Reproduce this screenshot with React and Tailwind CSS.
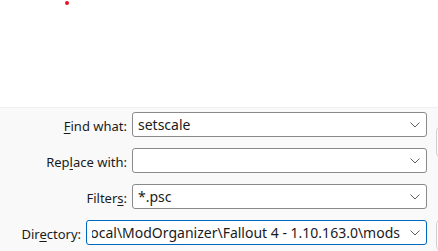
import React from 'react';

const Chevron = () => (
  <svg width="10" height="6" viewBox="0 0 10 6" className="shrink-0">
    <path d="M0.5 0.5 L5 5 L9.5 0.5" fill="none" stroke="#5f5f5f" strokeWidth="1" />
  </svg>
);

const Combo = ({ value, focused, rightAlign }) => (
  <div
    className={`h-[25px] flex items-center bg-white rounded-[3px] border ${
      focused ? 'border-[#0067c0]' : 'border-[#8a8a8a]'
    } pl-[5px] pr-[6px]`}
  >
    <div
      className={`flex-1 min-w-0 overflow-hidden whitespace-nowrap flex ${
        rightAlign ? 'justify-end' : ''
      } text-[14px] leading-[20px] text-[#1b1b1b]`}
    >
      <span>{value}</span>
    </div>
    <div className="w-[20px] flex justify-end">
      <Chevron />
    </div>
  </div>
);

const Label = ({ pre, u, post }) => (
  <span className="text-[13px] leading-[18px] text-[#1b1b1b] whitespace-nowrap">
    {pre}
    <span className="underline underline-offset-2">{u}</span>
    {post}
  </span>
);

const App = () => {
  return (
    <div
      className="w-[438px] h-[251px] overflow-hidden flex flex-col bg-white"
      style={{ fontFamily: '"Segoe UI", "Noto Sans", sans-serif' }}
    >
      <div className="h-[108px] relative bg-white border-b border-[#f0f0f0]">
        <div className="absolute left-[65px] top-[1px] w-[4px] h-[4px] rounded-full bg-[#e81123]" />
      </div>
      <div className="flex-1 bg-[#f9f9f9] relative pt-[3px]">
        <div className="flex items-center h-[25px] mt-[1px]">
          <div className="w-[127px] text-right"><Label pre="" u="F" post="ind what:" /></div>
          <div className="ml-[5px] w-[295px]"><Combo value="setscale" /></div>
        </div>
        <div className="flex items-center h-[25px] mt-[11px]">
          <div className="w-[127px] text-right"><Label pre="Rep" u="l" post="ace with:" /></div>
          <div className="ml-[5px] w-[295px]"><Combo value="" /></div>
        </div>
        <div className="flex items-center h-[25px] mt-[11px]">
          <div className="w-[127px] text-right"><Label pre="Filter" u="s" post=":" /></div>
          <div className="ml-[5px] w-[295px]"><Combo value="*.psc" /></div>
        </div>
        <div className="flex items-center h-[25px] mt-[11px]">
          <div className="w-[81px] text-right"><Label pre="Dir" u="e" post="ctory:" /></div>
          <div className="ml-[5px] w-[341px]">
            <Combo focused rightAlign value="C:\Users\user\AppData\Local\ModOrganizer\Fallout 4 - 1.10.163.0\mods" />
          </div>
        </div>
        <div className="absolute left-[436px] top-[19px] w-[20px] h-[30px] rounded-[4px] border border-[#d0d0d0] bg-[#fdfdfd]" />
        <div className="absolute left-[436px] top-[112px] w-[20px] h-[30px] rounded-[4px] border border-[#d0d0d0] bg-[#fdfdfd]" />
      </div>
    </div>
  );
};

export default App;
